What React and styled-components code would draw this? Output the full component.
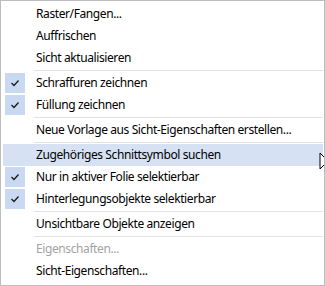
import React from "react";
import styled, { createGlobalStyle } from "styled-components";

const items = [
  { label: "Raster/Fangen..." },
  { label: "Auffrischen" },
  { label: "Sicht aktualisieren" },
  { sep: true },
  { label: "Schraffuren zeichnen", checked: true },
  { label: "Füllung zeichnen", checked: true },
  { sep: true },
  { label: "Neue Vorlage aus Sicht-Eigenschaften erstellen..." },
  { sep: true },
  { label: "Zugehöriges Schnittsymbol suchen", hover: true },
  { label: "Nur in aktiver Folie selektierbar", checked: true },
  { label: "Hinterlegungsobjekte selektierbar", checked: true },
  { sep: true },
  { label: "Unsichtbare Objekte anzeigen" },
  { sep: true },
  { label: "Eigenschaften...", disabled: true },
  { label: "Sicht-Eigenschaften..." },
];

const App = () => {
  return (
    <>
      <GlobalStyle />
      <Menu>
        {items.map((item, i) =>
          item.sep ? (
            <Separator key={i} />
          ) : (
            <Item key={i} $hover={item.hover} $disabled={item.disabled}>
              <Gutter>
                {item.checked && (
                  <CheckBox>
                    <svg width="10" height="8" viewBox="0 0 10 8">
                      <polyline
                        points="1.5,4 4,6.5 8.5,1.5"
                        fill="none"
                        stroke="#1a1a1a"
                        strokeWidth="1.3"
                      />
                    </svg>
                  </CheckBox>
                )}
              </Gutter>
              <Label>{item.label}</Label>
            </Item>
          )
        )}
        <Cursor>
          <svg width="14" height="22" viewBox="0 0 14 22">
            <path
              d="M1 1 L1 17 L5 13 L8 20 L10 19 L7 12.5 L12.5 12.5 Z"
              fill="#fff"
              stroke="#000"
              strokeWidth="1"
            />
          </svg>
        </Cursor>
      </Menu>
    </>
  );
};

const GlobalStyle = createGlobalStyle`
  body {
    margin: 0;
    background: #fff;
  }
`;

const Menu = styled.div`
  position: relative;
  width: 325px;
  height: 286px;
  box-sizing: border-box;
  border: 1px solid #bdbdbd;
  background: #fff;
  padding: 2px 1px 2px 2px;
  overflow: hidden;
  font-family: "Noto Sans", "Open Sans", sans-serif;
  font-size: 12px;
  letter-spacing: -0.4px;
  color: #000;
`;

const Item = styled.div`
  display: flex;
  align-items: center;
  height: 22px;
  box-sizing: border-box;
  background: ${(p) => (p.$hover ? "#d6e2f3" : "transparent")};
  color: ${(p) => (p.$disabled ? "#a3a3a3" : "#000")};
`;

const Gutter = styled.div`
  width: 33px;
  height: 100%;
  display: flex;
  align-items: center;
  padding-left: 2px;
  box-sizing: border-box;
  flex-shrink: 0;
`;

const CheckBox = styled.div`
  width: 20px;
  height: 20px;
  background: #c9d9f1;
  display: flex;
  align-items: center;
  justify-content: center;
`;

const Label = styled.span`
  white-space: nowrap;
  line-height: 22px;
`;

const Separator = styled.div`
  height: 3px;
  margin-left: 31px;
  display: flex;
  flex-direction: column;
  justify-content: center;

  &::before {
    content: "";
    display: block;
    height: 1px;
    background: #e2e2e2;
  }
`;

const Cursor = styled.div`
  position: absolute;
  left: 318px;
  top: 151px;
  line-height: 0;
`;

export default App;
